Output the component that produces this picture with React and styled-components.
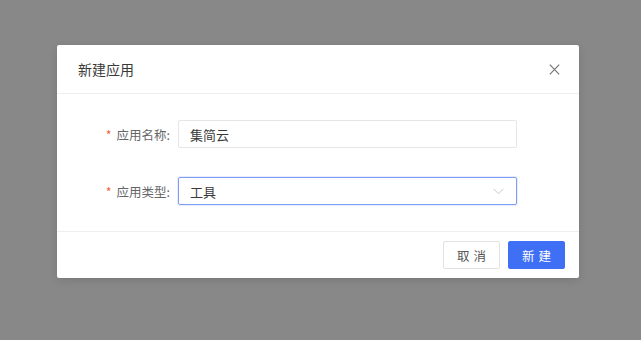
import styled, { createGlobalStyle } from "styled-components";

const GlobalStyle = createGlobalStyle`
  html, body {
    margin: 0;
    padding: 0;
    background: #888888;
    font-family: "Noto Sans CJK SC", "Noto Sans", sans-serif;
  }
`;

const Overlay = styled.div`
  width: 641px;
  height: 340px;
  background: #888888;
  padding: 45px 0 0 57px;
  box-sizing: border-box;
`;

const Modal = styled.div`
  width: 522px;
  height: 233px;
  background: #fff;
  border-radius: 2px;
  display: flex;
  flex-direction: column;
  box-shadow: 0 2px 8px rgba(0, 0, 0, 0.12);
`;

const Header = styled.div`
  height: 48px;
  display: flex;
  align-items: center;
  justify-content: space-between;
  padding: 0 19px 0 21px;
  border-bottom: 1px solid #eeeeee;
`;

const Title = styled.div`
  font-size: 14px;
  color: #3a3a3a;
`;

const CloseButton = styled.button`
  border: none;
  background: none;
  padding: 0;
  width: 11px;
  height: 11px;
  display: flex;
  cursor: pointer;
`;

const Body = styled.div`
  flex: 1;
  display: flex;
  flex-direction: column;
  gap: 29px;
  padding-top: 26px;
`;

const Row = styled.div`
  display: flex;
  align-items: center;
`;

const Label = styled.label`
  width: 113px;
  margin-right: 8px;
  text-align: right;
  font-size: 12.5px;
  color: #666;
  white-space: nowrap;
`;

const Required = styled.span`
  color: #f0643c;
  margin-right: 5px;
`;

const Field = styled.div`
  width: 339px;
  height: 28px;
  box-sizing: border-box;
  border: 1px solid ${(p) => (p.focused ? "#7e9ef6" : "#e6e6e6")};
  box-shadow: ${(p) => (p.focused ? "0 0 0 1px rgba(63, 111, 245, 0.12)" : "none")};
  border-radius: 2px;
  display: flex;
  align-items: center;
  justify-content: space-between;
  padding: 0 12px 0 11px;
  font-size: 13px;
  color: #3a3a3a;
`;

const Footer = styled.div`
  height: 47px;
  border-top: 1px solid #eeeeee;
  display: flex;
  align-items: center;
  justify-content: flex-end;
  gap: 8px;
  padding: 0 14px 0 0;
  box-sizing: border-box;
`;

const Button = styled.button`
  width: 57px;
  height: 28px;
  border-radius: 2px;
  font-family: inherit;
  font-size: 12.5px;
  letter-spacing: 4px;
  text-indent: 4px;
  cursor: pointer;
  border: 1px solid ${(p) => (p.primary ? "#3f6ff5" : "#e2e2e2")};
  background: ${(p) => (p.primary ? "#3f6ff5" : "#fff")};
  color: ${(p) => (p.primary ? "#fff" : "#555")};
`;

const App = () => {
  return (
    <>
      <GlobalStyle />
      <Overlay>
        <Modal>
          <Header>
            <Title>新建应用</Title>
            <CloseButton>
              <svg width="11" height="11" viewBox="0 0 11 11">
                <path d="M0.8 0.6L10.2 10.4M10.2 0.6L0.8 10.4" stroke="#777" strokeWidth="1.2" fill="none" />
              </svg>
            </CloseButton>
          </Header>
          <Body>
            <Row>
              <Label>
                <Required>*</Required>应用名称:
              </Label>
              <Field>集简云</Field>
            </Row>
            <Row>
              <Label>
                <Required>*</Required>应用类型:
              </Label>
              <Field focused>
                工具
                <svg width="11" height="7" viewBox="0 0 11 7">
                  <path d="M0.5 0.8L5.5 5.8L10.5 0.8" stroke="#c8c8c8" strokeWidth="1" fill="none" />
                </svg>
              </Field>
            </Row>
          </Body>
          <Footer>
            <Button>取消</Button>
            <Button primary>新建</Button>
          </Footer>
        </Modal>
      </Overlay>
    </>
  );
};

export default App;
